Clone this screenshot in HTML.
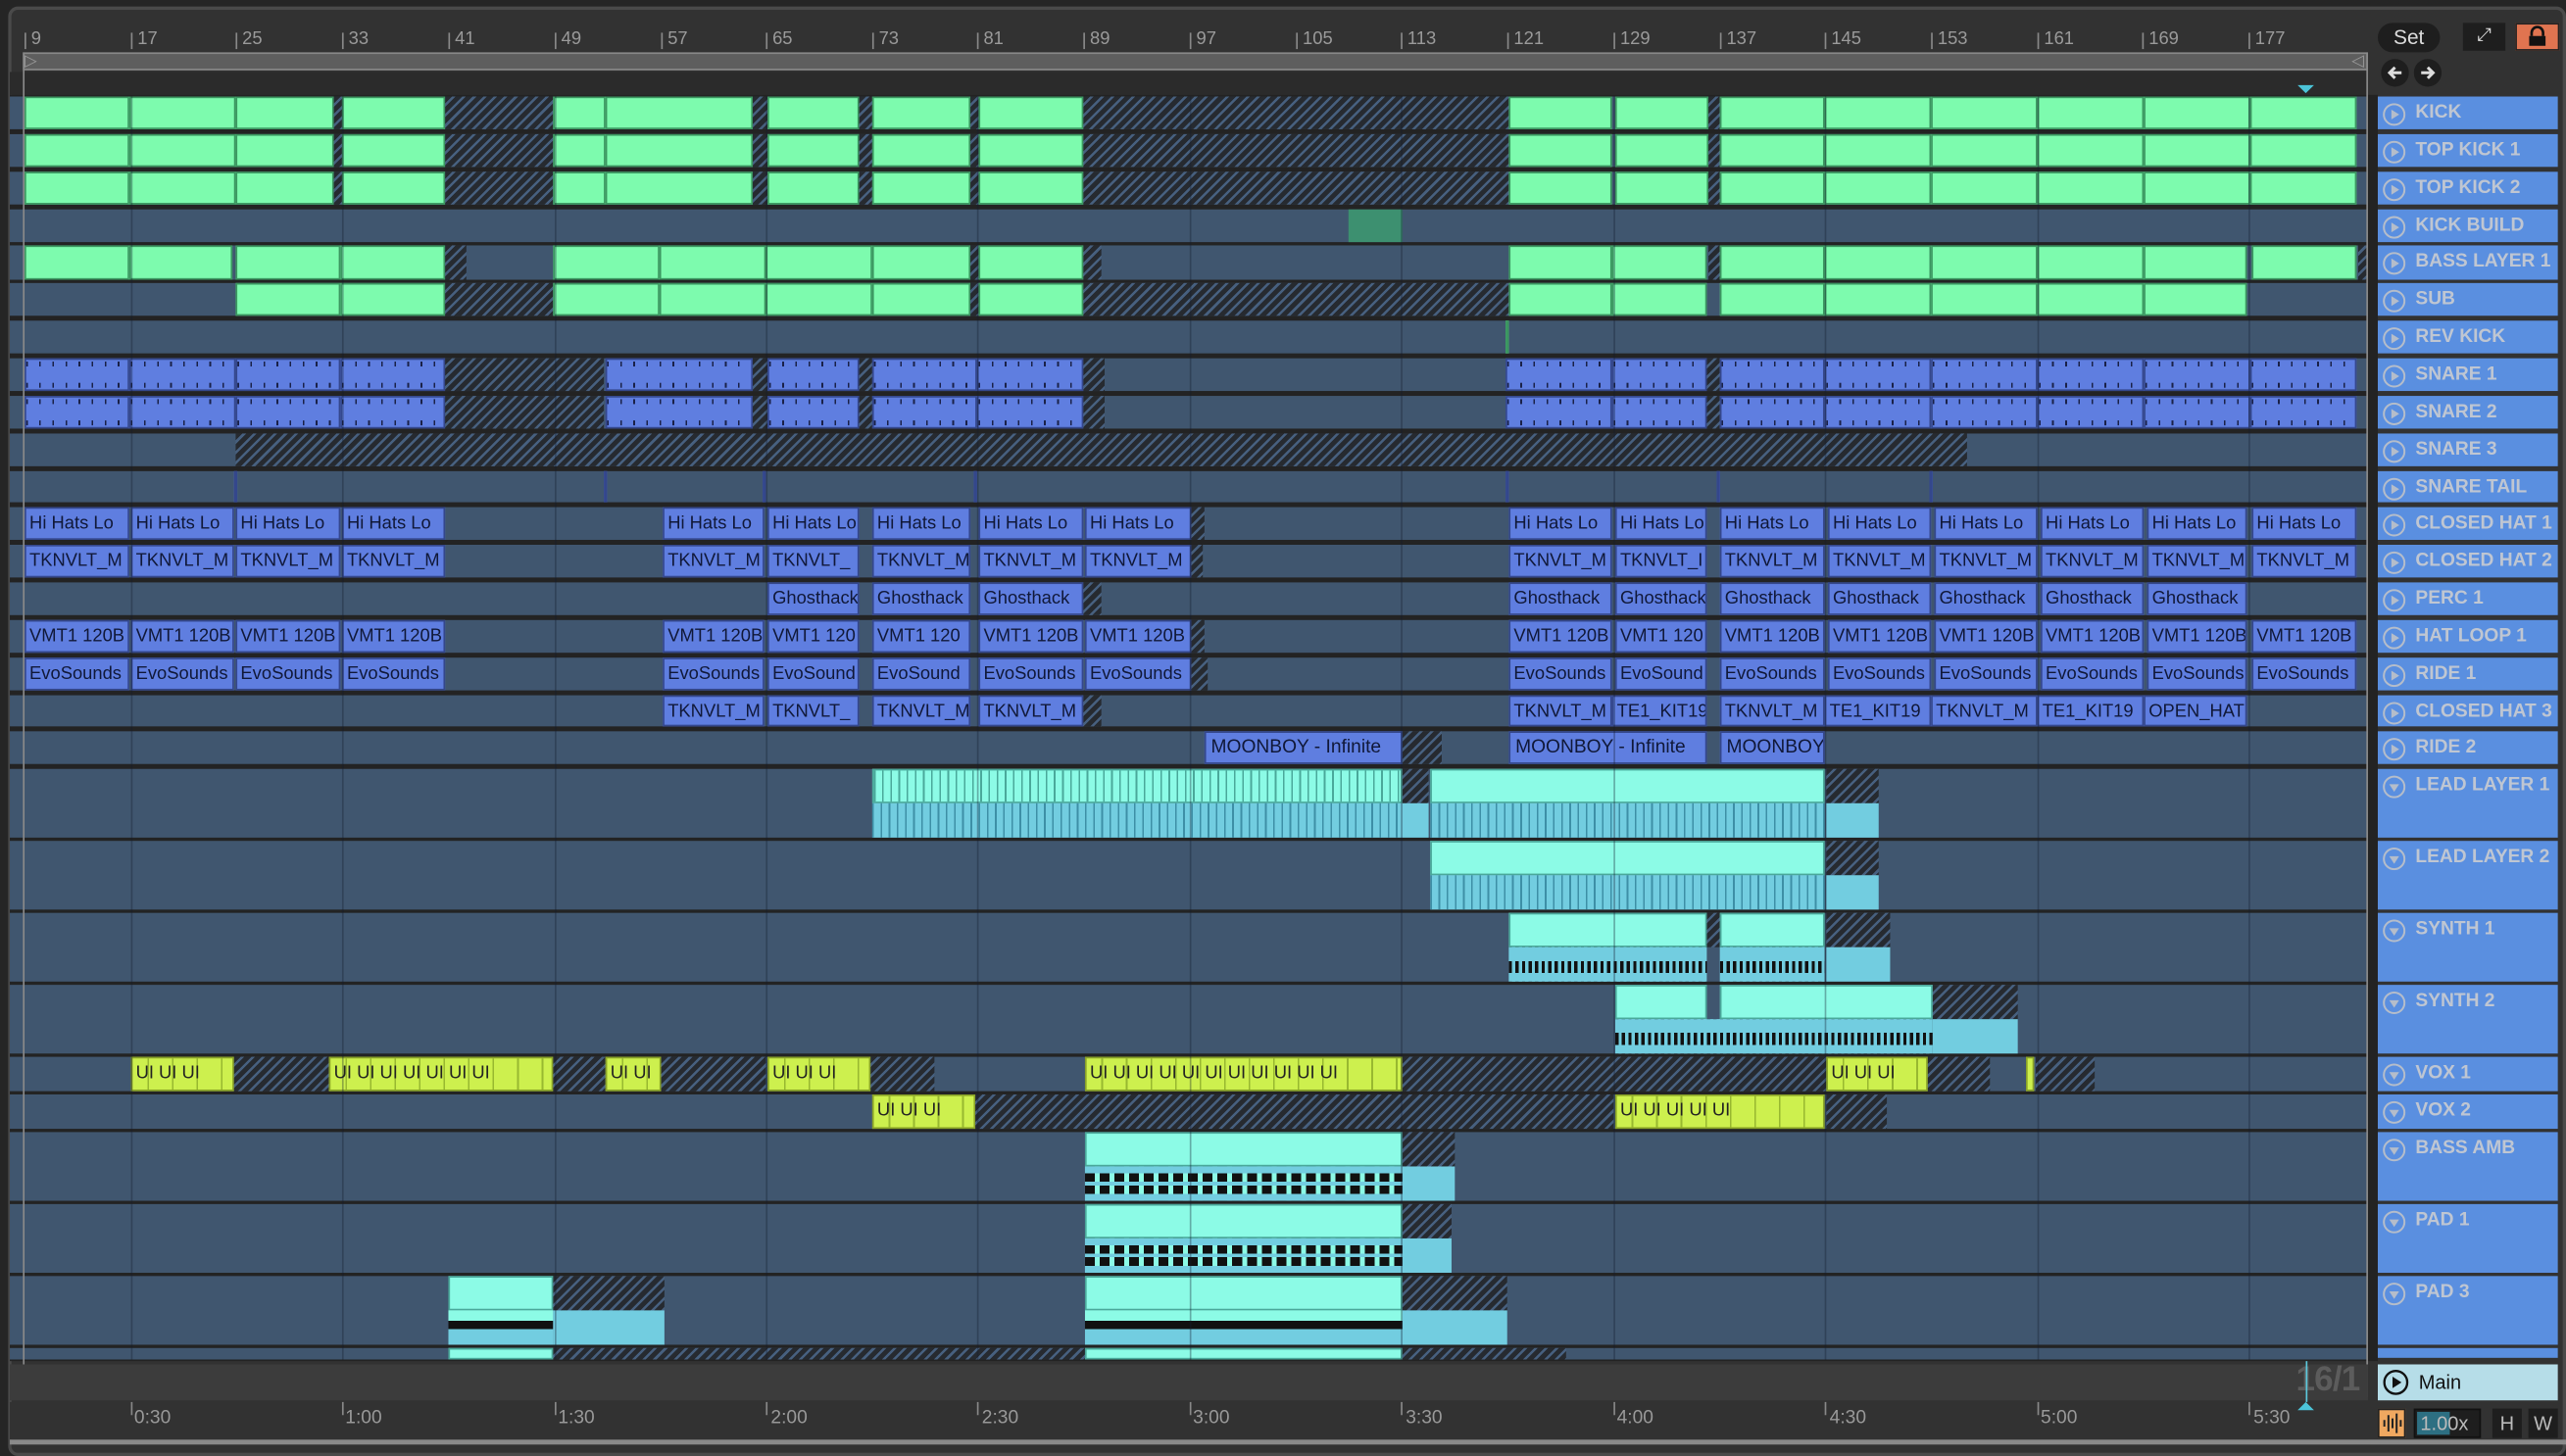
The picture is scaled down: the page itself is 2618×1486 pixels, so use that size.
<!DOCTYPE html>
<html><head><meta charset="utf-8">
<style>
*{margin:0;padding:0;box-sizing:border-box}
html,body{width:2618px;height:1486px;overflow:hidden;background:#252525}
#w{position:absolute;left:0;top:0;width:1568px;height:890px;transform:scale(1.66964,1.66966);transform-origin:0 0;font-family:"Liberation Sans",sans-serif;background:#252525}
.a{position:absolute}
.row{position:absolute;left:6px;width:1441px;background:#40566f}
.row i,.row b{position:absolute;top:0;height:100%;display:block;font-style:normal;font-weight:normal}
.g{background:#7dfbae;border:1px solid #3b9660}
.dg{background:#3d9070}
.b{background:#5f7ee0;border:1px solid #34478c;color:#101838;font-size:11px;line-height:18px;padding-left:2px;white-space:nowrap;overflow:hidden}
.t{background:repeating-linear-gradient(90deg,#1a2148 0 1px,transparent 1px 8px) 0 1px/100% 3px no-repeat,repeating-linear-gradient(90deg,#1a2148 0 1px,transparent 1px 8px) 0 14px/100% 3px no-repeat,#5f7ee0}
.h{background:repeating-linear-gradient(135deg,#262a30 0 3px,#47607f 3px 4.5px)}
.row .u{height:50%}
.row .l{top:50%;height:50%}
.cy{background:#8cfbe6;border:1px solid #4aa89a}
.cl{background:repeating-linear-gradient(90deg,#4aa89a 0 1px,transparent 1px 5px),#8cfbe6}
.lb{background:#72cde0}
.ln{background:repeating-linear-gradient(90deg,#3d8fa6 0 1px,transparent 1px 5px),#72cde0}
.md{background:linear-gradient(#72cde0 0 40%,transparent 40% 75%,#72cde0 75%),repeating-linear-gradient(90deg,#111 0 2px,#72cde0 2px 4px)}
.ck{background:linear-gradient(#72cde0 0 20%,transparent 20% 45%,#72cde0 45% 55%,transparent 55% 80%,#72cde0 80%),repeating-linear-gradient(90deg,#111 0 6px,#8cfbe6 6px 9px)}
.bk{background:linear-gradient(#8cfbe6 0 30%,#111 30% 55%,#72cde0 55%)}
.y{background:repeating-linear-gradient(90deg,transparent 0 9px,#98b830 9px 10px,transparent 10px 15px),#cdf04e;border:1px solid #8aa328;color:#222;font-size:11px;line-height:19px;padding-left:2px;overflow:hidden;white-space:nowrap}
.tl{position:absolute;left:1453px;width:110px;background:#5a8fe0;color:#bfc6d2;font-weight:bold;font-size:11.5px}
.tl span{position:absolute;left:23px;top:4px;white-space:nowrap}
.tl svg{position:absolute;left:3px;top:4px}
.rn{position:absolute;top:18px;font-size:11px;color:#9a9a9a}
.tk{position:absolute;top:20px;width:1px;height:10px;background:#888}
.gl{position:absolute;top:59px;height:772px;width:1px;background:rgba(20,30,45,.35)}
.bt{position:absolute;top:861px;font-size:11.5px;color:#999}
</style></head><body><div id="w">
<div class="a" style="left:5px;top:4px;width:1563px;height:886px;border:2px solid #4a4a4a;border-radius:6px;background:#323232"></div>
<div class="a" style="left:14px;top:32px;width:1433px;height:11px;background:#5e5e5e;border:1px solid #888"></div>
<div class="a" style="left:15px;top:33px;color:#999;font-size:10px;line-height:9px">&#9655;</div>
<div class="a" style="left:1437px;top:33px;color:#999;font-size:10px;line-height:9px">&#9665;</div>
<div class="a" style="left:6px;top:44px;width:1441px;height:14px;background:#2b2b2b"></div>
<div class="a" style="left:1404px;top:52px;width:0;height:0;border-left:5px solid transparent;border-right:5px solid transparent;border-top:5px solid #4cc4d8"></div>
<div class="a" style="left:6px;top:58px;width:1447px;height:774px;background:#232323"></div>

<div class="tk" style="left:15px"></div><div class="rn" style="left:19px">9</div>
<div class="tk" style="left:80px"></div><div class="rn" style="left:84px">17</div>
<div class="tk" style="left:144px"></div><div class="rn" style="left:148px">25</div>
<div class="tk" style="left:209px"></div><div class="rn" style="left:213px">33</div>
<div class="tk" style="left:274px"></div><div class="rn" style="left:278px">41</div>
<div class="tk" style="left:339px"></div><div class="rn" style="left:343px">49</div>
<div class="tk" style="left:404px"></div><div class="rn" style="left:408px">57</div>
<div class="tk" style="left:468px"></div><div class="rn" style="left:472px">65</div>
<div class="tk" style="left:533px"></div><div class="rn" style="left:537px">73</div>
<div class="tk" style="left:597px"></div><div class="rn" style="left:601px">81</div>
<div class="tk" style="left:662px"></div><div class="rn" style="left:666px">89</div>
<div class="tk" style="left:727px"></div><div class="rn" style="left:731px">97</div>
<div class="tk" style="left:792px"></div><div class="rn" style="left:796px">105</div>
<div class="tk" style="left:856px"></div><div class="rn" style="left:860px">113</div>
<div class="tk" style="left:921px"></div><div class="rn" style="left:925px">121</div>
<div class="tk" style="left:986px"></div><div class="rn" style="left:990px">129</div>
<div class="tk" style="left:1051px"></div><div class="rn" style="left:1055px">137</div>
<div class="tk" style="left:1115px"></div><div class="rn" style="left:1119px">145</div>
<div class="tk" style="left:1180px"></div><div class="rn" style="left:1184px">153</div>
<div class="tk" style="left:1245px"></div><div class="rn" style="left:1249px">161</div>
<div class="tk" style="left:1309px"></div><div class="rn" style="left:1313px">169</div>
<div class="tk" style="left:1374px"></div><div class="rn" style="left:1378px">177</div>

<div class="row" style="top:59px;height:20px"><i class="g" style="left:9px;width:64px"></i><i class="g" style="left:73px;width:65px"></i><i class="g" style="left:138px;width:60px"></i><i class="h" style="left:198px;width:5px"></i><i class="g" style="left:203px;width:63px"></i><i class="h" style="left:266px;width:66px"></i><i class="g" style="left:332px;width:32px"></i><i class="g" style="left:364px;width:90px"></i><i class="h" style="left:454px;width:9px"></i><i class="g" style="left:463px;width:56px"></i><i class="h" style="left:519px;width:8px"></i><i class="g" style="left:527px;width:60px"></i><i class="h" style="left:587px;width:5px"></i><i class="g" style="left:592px;width:64px"></i><i class="h" style="left:656px;width:260px"></i><i class="g" style="left:916px;width:63px"></i><i class="g" style="left:981px;width:57px"></i><i class="h" style="left:1038px;width:7px"></i><i class="g" style="left:1045px;width:64px"></i><i class="g" style="left:1109px;width:65px"></i><i class="g" style="left:1174px;width:65px"></i><i class="g" style="left:1239px;width:65px"></i><i class="g" style="left:1304px;width:65px"></i><i class="g" style="left:1369px;width:65px"></i></div>
<div class="row" style="top:82px;height:20px"><i class="g" style="left:9px;width:64px"></i><i class="g" style="left:73px;width:65px"></i><i class="g" style="left:138px;width:60px"></i><i class="h" style="left:198px;width:5px"></i><i class="g" style="left:203px;width:63px"></i><i class="h" style="left:266px;width:66px"></i><i class="g" style="left:332px;width:32px"></i><i class="g" style="left:364px;width:90px"></i><i class="h" style="left:454px;width:9px"></i><i class="g" style="left:463px;width:56px"></i><i class="h" style="left:519px;width:8px"></i><i class="g" style="left:527px;width:60px"></i><i class="h" style="left:587px;width:5px"></i><i class="g" style="left:592px;width:64px"></i><i class="h" style="left:656px;width:260px"></i><i class="g" style="left:916px;width:63px"></i><i class="g" style="left:981px;width:57px"></i><i class="h" style="left:1038px;width:7px"></i><i class="g" style="left:1045px;width:64px"></i><i class="g" style="left:1109px;width:65px"></i><i class="g" style="left:1174px;width:65px"></i><i class="g" style="left:1239px;width:65px"></i><i class="g" style="left:1304px;width:65px"></i><i class="g" style="left:1369px;width:65px"></i></div>
<div class="row" style="top:105px;height:20px"><i class="g" style="left:9px;width:64px"></i><i class="g" style="left:73px;width:65px"></i><i class="g" style="left:138px;width:60px"></i><i class="h" style="left:198px;width:5px"></i><i class="g" style="left:203px;width:63px"></i><i class="h" style="left:266px;width:66px"></i><i class="g" style="left:332px;width:32px"></i><i class="g" style="left:364px;width:90px"></i><i class="h" style="left:454px;width:9px"></i><i class="g" style="left:463px;width:56px"></i><i class="h" style="left:519px;width:8px"></i><i class="g" style="left:527px;width:60px"></i><i class="h" style="left:587px;width:5px"></i><i class="g" style="left:592px;width:64px"></i><i class="h" style="left:656px;width:260px"></i><i class="g" style="left:916px;width:63px"></i><i class="g" style="left:981px;width:57px"></i><i class="h" style="left:1038px;width:7px"></i><i class="g" style="left:1045px;width:64px"></i><i class="g" style="left:1109px;width:65px"></i><i class="g" style="left:1174px;width:65px"></i><i class="g" style="left:1239px;width:65px"></i><i class="g" style="left:1304px;width:65px"></i><i class="g" style="left:1369px;width:65px"></i></div>
<div class="row" style="top:128px;height:20px"><i class="dg" style="left:818px;width:33px"></i></div>
<div class="row" style="top:150px;height:21px"><i class="g" style="left:9px;width:64px"></i><i class="g" style="left:73px;width:63px"></i><i class="g" style="left:138px;width:64px"></i><i class="g" style="left:202px;width:64px"></i><i class="h" style="left:266px;width:13px"></i><i class="g" style="left:332px;width:65px"></i><i class="g" style="left:397px;width:65px"></i><i class="g" style="left:462px;width:65px"></i><i class="g" style="left:527px;width:60px"></i><i class="h" style="left:587px;width:5px"></i><i class="g" style="left:592px;width:64px"></i><i class="h" style="left:656px;width:11px"></i><i class="g" style="left:916px;width:63px"></i><i class="g" style="left:979px;width:58px"></i><i class="h" style="left:1038px;width:7px"></i><i class="g" style="left:1045px;width:64px"></i><i class="g" style="left:1109px;width:65px"></i><i class="g" style="left:1174px;width:65px"></i><i class="g" style="left:1239px;width:65px"></i><i class="g" style="left:1304px;width:63px"></i><i class="g" style="left:1370px;width:64px"></i><i class="h" style="left:1435px;width:6px"></i></div>
<div class="row" style="top:173px;height:20px"><i class="g" style="left:138px;width:64px"></i><i class="g" style="left:202px;width:64px"></i><i class="h" style="left:266px;width:66px"></i><i class="g" style="left:332px;width:65px"></i><i class="g" style="left:397px;width:65px"></i><i class="g" style="left:462px;width:65px"></i><i class="g" style="left:527px;width:60px"></i><i class="h" style="left:587px;width:5px"></i><i class="g" style="left:592px;width:64px"></i><i class="h" style="left:656px;width:260px"></i><i class="g" style="left:916px;width:63px"></i><i class="g" style="left:979px;width:58px"></i><i class="g" style="left:1045px;width:64px"></i><i class="g" style="left:1109px;width:65px"></i><i class="g" style="left:1174px;width:65px"></i><i class="g" style="left:1239px;width:65px"></i><i class="g" style="left:1304px;width:63px"></i></div>
<div class="row" style="top:196px;height:20px"><i class="g" style="left:914px;width:2px"></i></div>
<div class="row" style="top:219px;height:20px"><i class="b t" style="left:9px;width:64px"></i><i class="b t" style="left:73px;width:65px"></i><i class="b t" style="left:138px;width:64px"></i><i class="b t" style="left:202px;width:64px"></i><i class="h" style="left:266px;width:97px"></i><i class="b t" style="left:364px;width:90px"></i><i class="h" style="left:454px;width:9px"></i><i class="b t" style="left:463px;width:56px"></i><i class="h" style="left:519px;width:8px"></i><i class="b t" style="left:527px;width:64px"></i><i class="b t" style="left:591px;width:65px"></i><i class="h" style="left:656px;width:13px"></i><i class="b t" style="left:914px;width:65px"></i><i class="b t" style="left:979px;width:58px"></i><i class="h" style="left:1037px;width:8px"></i><i class="b t" style="left:1045px;width:64px"></i><i class="b t" style="left:1109px;width:65px"></i><i class="b t" style="left:1174px;width:65px"></i><i class="b t" style="left:1239px;width:65px"></i><i class="b t" style="left:1304px;width:65px"></i><i class="b t" style="left:1369px;width:65px"></i></div>
<div class="row" style="top:242px;height:20px"><i class="b t" style="left:9px;width:64px"></i><i class="b t" style="left:73px;width:65px"></i><i class="b t" style="left:138px;width:64px"></i><i class="b t" style="left:202px;width:64px"></i><i class="h" style="left:266px;width:97px"></i><i class="b t" style="left:364px;width:90px"></i><i class="h" style="left:454px;width:9px"></i><i class="b t" style="left:463px;width:56px"></i><i class="h" style="left:519px;width:8px"></i><i class="b t" style="left:527px;width:64px"></i><i class="b t" style="left:591px;width:65px"></i><i class="h" style="left:656px;width:13px"></i><i class="b t" style="left:914px;width:65px"></i><i class="b t" style="left:979px;width:58px"></i><i class="h" style="left:1037px;width:8px"></i><i class="b t" style="left:1045px;width:64px"></i><i class="b t" style="left:1109px;width:65px"></i><i class="b t" style="left:1174px;width:65px"></i><i class="b t" style="left:1239px;width:65px"></i><i class="b t" style="left:1304px;width:65px"></i><i class="b t" style="left:1369px;width:65px"></i></div>
<div class="row" style="top:265px;height:20px"><i class="h" style="left:138px;width:1058px"></i></div>
<div class="row" style="top:288px;height:19px"><i class="b" style="left:137px;width:2px;padding:0"></i><i class="b" style="left:363px;width:2px;padding:0"></i><i class="b" style="left:460px;width:2px;padding:0"></i><i class="b" style="left:589px;width:2px;padding:0"></i><i class="b" style="left:914px;width:2px;padding:0"></i><i class="b" style="left:1043px;width:2px;padding:0"></i><i class="b" style="left:1173px;width:2px;padding:0"></i></div>
<div class="row" style="top:310px;height:20px"><i class="b" style="left:9px;width:64px">Hi Hats Lo</i><i class="b" style="left:74px;width:63px">Hi Hats Lo</i><i class="b" style="left:138px;width:64px">Hi Hats Lo</i><i class="b" style="left:203px;width:63px">Hi Hats Lo</i><i class="b" style="left:399px;width:62px">Hi Hats Lo</i><i class="b" style="left:463px;width:56px">Hi Hats Lo</i><i class="b" style="left:527px;width:60px">Hi Hats Lo</i><i class="b" style="left:592px;width:64px">Hi Hats Lo</i><i class="b" style="left:657px;width:65px">Hi Hats Lo</i><i class="h" style="left:722px;width:8px"></i><i class="b" style="left:916px;width:63px">Hi Hats Lo</i><i class="b" style="left:981px;width:56px">Hi Hats Lo</i><i class="b" style="left:1045px;width:64px">Hi Hats Lo</i><i class="b" style="left:1111px;width:63px">Hi Hats Lo</i><i class="b" style="left:1176px;width:63px">Hi Hats Lo</i><i class="b" style="left:1241px;width:63px">Hi Hats Lo</i><i class="b" style="left:1306px;width:61px">Hi Hats Lo</i><i class="b" style="left:1370px;width:64px">Hi Hats Lo</i></div>
<div class="row" style="top:333px;height:20px"><i class="b" style="left:9px;width:64px">TKNVLT_M</i><i class="b" style="left:74px;width:63px">TKNVLT_M</i><i class="b" style="left:138px;width:64px">TKNVLT_M</i><i class="b" style="left:203px;width:63px">TKNVLT_M</i><i class="b" style="left:399px;width:62px">TKNVLT_M</i><i class="b" style="left:463px;width:56px">TKNVLT_</i><i class="b" style="left:527px;width:60px">TKNVLT_M</i><i class="b" style="left:592px;width:64px">TKNVLT_M</i><i class="b" style="left:657px;width:65px">TKNVLT_M</i><i class="h" style="left:722px;width:7px"></i><i class="b" style="left:916px;width:63px">TKNVLT_M</i><i class="b" style="left:981px;width:56px">TKNVLT_I</i><i class="b" style="left:1045px;width:64px">TKNVLT_M</i><i class="b" style="left:1111px;width:63px">TKNVLT_M</i><i class="b" style="left:1176px;width:63px">TKNVLT_M</i><i class="b" style="left:1241px;width:63px">TKNVLT_M</i><i class="b" style="left:1306px;width:61px">TKNVLT_M</i><i class="b" style="left:1370px;width:64px">TKNVLT_M</i></div>
<div class="row" style="top:356px;height:20px"><i class="b" style="left:463px;width:56px">Ghosthack</i><i class="b" style="left:527px;width:60px">Ghosthack</i><i class="b" style="left:592px;width:64px">Ghosthack</i><i class="h" style="left:656px;width:11px"></i><i class="b" style="left:916px;width:63px">Ghosthack</i><i class="b" style="left:981px;width:56px">Ghosthack</i><i class="b" style="left:1045px;width:64px">Ghosthack</i><i class="b" style="left:1111px;width:63px">Ghosthack</i><i class="b" style="left:1176px;width:63px">Ghosthack</i><i class="b" style="left:1241px;width:63px">Ghosthack</i><i class="b" style="left:1306px;width:61px">Ghosthack</i></div>
<div class="row" style="top:379px;height:20px"><i class="b" style="left:9px;width:64px">VMT1 120B</i><i class="b" style="left:74px;width:63px">VMT1 120B</i><i class="b" style="left:138px;width:64px">VMT1 120B</i><i class="b" style="left:203px;width:63px">VMT1 120B</i><i class="b" style="left:399px;width:62px">VMT1 120B</i><i class="b" style="left:463px;width:56px">VMT1 120</i><i class="b" style="left:527px;width:60px">VMT1 120</i><i class="b" style="left:592px;width:64px">VMT1 120B</i><i class="b" style="left:657px;width:65px">VMT1 120B</i><i class="h" style="left:722px;width:8px"></i><i class="b" style="left:916px;width:63px">VMT1 120B</i><i class="b" style="left:981px;width:56px">VMT1 120</i><i class="b" style="left:1045px;width:64px">VMT1 120B</i><i class="b" style="left:1111px;width:63px">VMT1 120B</i><i class="b" style="left:1176px;width:63px">VMT1 120B</i><i class="b" style="left:1241px;width:63px">VMT1 120B</i><i class="b" style="left:1306px;width:61px">VMT1 120B</i><i class="b" style="left:1370px;width:64px">VMT1 120B</i></div>
<div class="row" style="top:402px;height:20px"><i class="b" style="left:9px;width:64px">EvoSounds</i><i class="b" style="left:74px;width:63px">EvoSounds</i><i class="b" style="left:138px;width:64px">EvoSounds</i><i class="b" style="left:203px;width:63px">EvoSounds</i><i class="b" style="left:399px;width:62px">EvoSounds</i><i class="b" style="left:463px;width:56px">EvoSound</i><i class="b" style="left:527px;width:60px">EvoSound</i><i class="b" style="left:592px;width:64px">EvoSounds</i><i class="b" style="left:657px;width:65px">EvoSounds</i><i class="h" style="left:722px;width:10px"></i><i class="b" style="left:916px;width:63px">EvoSounds</i><i class="b" style="left:981px;width:56px">EvoSound</i><i class="b" style="left:1045px;width:64px">EvoSounds</i><i class="b" style="left:1111px;width:63px">EvoSounds</i><i class="b" style="left:1176px;width:63px">EvoSounds</i><i class="b" style="left:1241px;width:63px">EvoSounds</i><i class="b" style="left:1306px;width:61px">EvoSounds</i><i class="b" style="left:1370px;width:64px">EvoSounds</i></div>
<div class="row" style="top:425px;height:19px"><i class="b" style="left:399px;width:62px">TKNVLT_M</i><i class="b" style="left:463px;width:56px">TKNVLT_</i><i class="b" style="left:527px;width:60px">TKNVLT_M</i><i class="b" style="left:592px;width:64px">TKNVLT_M</i><i class="h" style="left:656px;width:11px"></i><i class="b" style="left:916px;width:63px">TKNVLT_M</i><i class="b" style="left:979px;width:58px">TE1_KIT19</i><i class="b" style="left:1045px;width:64px">TKNVLT_M</i><i class="b" style="left:1109px;width:65px">TE1_KIT19</i><i class="b" style="left:1174px;width:65px">TKNVLT_M</i><i class="b" style="left:1239px;width:65px">TE1_KIT19</i><i class="b" style="left:1304px;width:63px">OPEN_HAT</i></div>
<div class="row" style="top:447px;height:20px"><i class="b" style="left:730px;width:121px;font-size:11.5px;padding-left:3px">MOONBOY - Infinite</i><i class="h" style="left:851px;width:24px"></i><i class="b" style="left:916px;width:121px;font-size:11.5px;padding-left:3px">MOONBOY - Infinite</i><i class="b" style="left:1045px;width:64px;font-size:11.5px;padding-left:3px">MOONBOY</i></div>

<div class="row" style="top:470px;height:42px"><i class="u cy cl" style="left:527px;width:324px"></i><i class="l ln" style="left:527px;width:324px"></i><i class="u h" style="left:851px;width:16px"></i><i class="l lb" style="left:851px;width:16px"></i><i class="u cy" style="left:868px;width:241px"></i><i class="l ln" style="left:868px;width:241px"></i><i class="u h" style="left:1110px;width:32px"></i><i class="l lb" style="left:1110px;width:32px"></i></div>
<div class="row" style="top:514px;height:42px"><i class="u cy" style="left:868px;width:241px"></i><i class="l ln" style="left:868px;width:241px"></i><i class="u h" style="left:1110px;width:32px"></i><i class="l lb" style="left:1110px;width:32px"></i></div>
<div class="row" style="top:558px;height:42px"><i class="u cy" style="left:916px;width:121px"></i><i class="l md" style="left:916px;width:121px"></i><i class="u h" style="left:1037px;width:8px"></i><i class="u cy" style="left:1045px;width:64px"></i><i class="l md" style="left:1045px;width:64px"></i><i class="u h" style="left:1110px;width:39px"></i><i class="l lb" style="left:1110px;width:39px"></i></div>
<div class="row" style="top:602px;height:42px"><i class="u cy" style="left:981px;width:56px"></i><i class="u cy" style="left:1045px;width:130px"></i><i class="l md" style="left:981px;width:194px"></i><i class="u h" style="left:1175px;width:52px"></i><i class="l lb" style="left:1175px;width:52px"></i></div>
<div class="row" style="top:646px;height:21px"><i class="y" style="left:74px;width:63px">UI UI UI</i><i class="h" style="left:137px;width:58px"></i><i class="y" style="left:195px;width:137px">UI UI UI UI UI UI UI</i><i class="h" style="left:332px;width:32px"></i><i class="y" style="left:364px;width:34px">UI UI</i><i class="h" style="left:398px;width:64px"></i><i class="y" style="left:463px;width:63px">UI UI UI</i><i class="h" style="left:526px;width:39px"></i><i class="y" style="left:657px;width:194px">UI UI UI UI UI UI UI UI UI UI UI</i><i class="h" style="left:851px;width:259px"></i><i class="y" style="left:1110px;width:62px">UI UI UI</i><i class="h" style="left:1172px;width:38px"></i><i class="y" style="left:1232px;width:5px;padding:0"></i><i class="h" style="left:1238px;width:36px"></i></div>
<div class="row" style="top:669px;height:21px"><i class="y" style="left:527px;width:63px">UI UI UI</i><i class="h" style="left:590px;width:390px"></i><i class="y" style="left:981px;width:128px">UI UI UI UI UI</i><i class="h" style="left:1110px;width:37px"></i></div>
<div class="row" style="top:692px;height:42px"><i class="u cy" style="left:657px;width:194px"></i><i class="l ck" style="left:657px;width:194px"></i><i class="u h" style="left:851px;width:32px"></i><i class="l lb" style="left:851px;width:32px"></i></div>
<div class="row" style="top:736px;height:42px"><i class="u cy" style="left:657px;width:194px"></i><i class="l ck" style="left:657px;width:194px"></i><i class="u h" style="left:851px;width:30px"></i><i class="l lb" style="left:851px;width:30px"></i></div>
<div class="row" style="top:780px;height:42px"><i class="u cy" style="left:268px;width:64px"></i><i class="l bk" style="left:268px;width:64px"></i><i class="u h" style="left:332px;width:68px"></i><i class="l lb" style="left:332px;width:68px"></i><i class="u cy" style="left:657px;width:194px"></i><i class="l bk" style="left:657px;width:194px"></i><i class="u h" style="left:851px;width:64px"></i><i class="l lb" style="left:851px;width:64px"></i></div>
<div class="row" style="top:824px;height:7px"><i class="cy" style="left:268px;width:64px"></i><i class="h" style="left:332px;width:325px"></i><i class="cy" style="left:657px;width:194px"></i><i class="h" style="left:851px;width:100px"></i></div>

<div class="gl" style="left:80px"></div><div class="gl" style="left:209px"></div><div class="gl" style="left:339px"></div><div class="gl" style="left:468px"></div><div class="gl" style="left:597px"></div><div class="gl" style="left:727px"></div><div class="gl" style="left:856px"></div><div class="gl" style="left:986px"></div><div class="gl" style="left:1115px"></div><div class="gl" style="left:1245px"></div><div class="gl" style="left:1374px"></div>
<div class="a" style="left:14px;top:32px;width:1px;height:822px;background:#8a8a8a"></div>
<div class="a" style="left:1446px;top:32px;width:1px;height:822px;background:#8a8a8a"></div>

<div class="a" style="left:6px;top:834px;width:1441px;height:22px;background:#3c3c3c"></div>
<div class="a" style="left:1403px;top:832px;color:#5c5c5c;font-size:21px;font-weight:bold;letter-spacing:-0.5px">16/1</div>
<div class="a" style="left:1409px;top:832px;width:1px;height:26px;background:#5cc8dc"></div>
<div class="a" style="left:6px;top:857px;width:1441px;height:23px;background:#323232"></div>
<div class="a" style="left:1404px;top:857px;width:0;height:0;border-left:5px solid transparent;border-right:5px solid transparent;border-bottom:5px solid #4cc4d8"></div>
<div class="a" style="left:6px;top:880px;width:1562px;height:3px;background:#8a8a8a"></div>
<div class="bt" style="left:82px">0:30</div><div class="bt" style="left:211px">1:00</div><div class="bt" style="left:341px">1:30</div><div class="bt" style="left:471px">2:00</div><div class="bt" style="left:600px">2:30</div><div class="bt" style="left:729px">3:00</div><div class="bt" style="left:859px">3:30</div><div class="bt" style="left:988px">4:00</div><div class="bt" style="left:1118px">4:30</div><div class="bt" style="left:1247px">5:00</div><div class="bt" style="left:1377px">5:30</div>
<div class="a" style="left:80px;top:857px;width:1px;height:8px;background:#888"></div><div class="a" style="left:209px;top:857px;width:1px;height:8px;background:#888"></div><div class="a" style="left:339px;top:857px;width:1px;height:8px;background:#888"></div><div class="a" style="left:468px;top:857px;width:1px;height:8px;background:#888"></div><div class="a" style="left:597px;top:857px;width:1px;height:8px;background:#888"></div><div class="a" style="left:727px;top:857px;width:1px;height:8px;background:#888"></div><div class="a" style="left:856px;top:857px;width:1px;height:8px;background:#888"></div><div class="a" style="left:986px;top:857px;width:1px;height:8px;background:#888"></div><div class="a" style="left:1115px;top:857px;width:1px;height:8px;background:#888"></div><div class="a" style="left:1245px;top:857px;width:1px;height:8px;background:#888"></div><div class="a" style="left:1374px;top:857px;width:1px;height:8px;background:#888"></div>

<div class="a" style="left:1453px;top:14px;width:38px;height:18px;border-radius:9px;background:#1e1e1e;color:#ddd;font-size:12.5px;text-align:center;line-height:18px">Set</div>
<div class="a" style="left:1505px;top:14px;width:26px;height:17px;background:#1e1e1e;color:#ddd;font-size:11px;text-align:center;line-height:17px">&#10530;</div>
<div class="a" style="left:1537px;top:14px;width:27px;height:17px;background:#e07450;border:1px solid #222"><svg width="25" height="15" viewBox="0 0 25 15"><path d="M9 7V5a3.5 3.5 0 0 1 7 0v2" fill="none" stroke="#111" stroke-width="1.6"/><rect x="7.5" y="7" width="10" height="6" fill="#111"/></svg></div>
<svg class="a" style="left:1455px;top:36px" width="17" height="17"><circle cx="8.5" cy="8.5" r="8.5" fill="#1e1e1e"/><path d="M12.5 8.5H5.5M8.5 5.2L5.2 8.5l3.3 3.3" fill="none" stroke="#ddd" stroke-width="1.8"/></svg>
<svg class="a" style="left:1475px;top:36px" width="17" height="17"><circle cx="8.5" cy="8.5" r="8.5" fill="#1e1e1e"/><path d="M4.5 8.5h7M8.5 5.2l3.3 3.3-3.3 3.3" fill="none" stroke="#ddd" stroke-width="1.8"/></svg>

<svg width="0" height="0" style="position:absolute"><defs><g id="p"><circle cx="7" cy="7" r="6.3" fill="none" stroke="#b5bdca" stroke-width="1.2"/><path d="M5.3 4v6l4.8-3z" fill="#b5bdca"/></g><g id="d"><circle cx="7" cy="7" r="6.3" fill="none" stroke="#b5bdca" stroke-width="1.2"/><path d="M4 5.4h6l-3 4.6z" fill="#b5bdca"/></g></defs></svg>
<div class="tl" style="top:59px;height:20px"><svg width="14" height="14"><use href="#p"/></svg><span>KICK</span></div>
<div class="tl" style="top:82px;height:20px"><svg width="14" height="14"><use href="#p"/></svg><span>TOP KICK 1</span></div>
<div class="tl" style="top:105px;height:20px"><svg width="14" height="14"><use href="#p"/></svg><span>TOP KICK 2</span></div>
<div class="tl" style="top:128px;height:20px"><svg width="14" height="14"><use href="#p"/></svg><span>KICK BUILD</span></div>
<div class="tl" style="top:150px;height:21px"><svg width="14" height="14"><use href="#p"/></svg><span>BASS LAYER 1</span></div>
<div class="tl" style="top:173px;height:20px"><svg width="14" height="14"><use href="#p"/></svg><span>SUB</span></div>
<div class="tl" style="top:196px;height:20px"><svg width="14" height="14"><use href="#p"/></svg><span>REV KICK</span></div>
<div class="tl" style="top:219px;height:20px"><svg width="14" height="14"><use href="#p"/></svg><span>SNARE 1</span></div>
<div class="tl" style="top:242px;height:20px"><svg width="14" height="14"><use href="#p"/></svg><span>SNARE 2</span></div>
<div class="tl" style="top:265px;height:20px"><svg width="14" height="14"><use href="#p"/></svg><span>SNARE 3</span></div>
<div class="tl" style="top:288px;height:19px"><svg width="14" height="14"><use href="#p"/></svg><span>SNARE TAIL</span></div>
<div class="tl" style="top:310px;height:20px"><svg width="14" height="14"><use href="#p"/></svg><span>CLOSED HAT 1</span></div>
<div class="tl" style="top:333px;height:20px"><svg width="14" height="14"><use href="#p"/></svg><span>CLOSED HAT 2</span></div>
<div class="tl" style="top:356px;height:20px"><svg width="14" height="14"><use href="#p"/></svg><span>PERC 1</span></div>
<div class="tl" style="top:379px;height:20px"><svg width="14" height="14"><use href="#p"/></svg><span>HAT LOOP 1</span></div>
<div class="tl" style="top:402px;height:20px"><svg width="14" height="14"><use href="#p"/></svg><span>RIDE 1</span></div>
<div class="tl" style="top:425px;height:19px"><svg width="14" height="14"><use href="#p"/></svg><span>CLOSED HAT 3</span></div>
<div class="tl" style="top:447px;height:20px"><svg width="14" height="14"><use href="#p"/></svg><span>RIDE 2</span></div>
<div class="tl" style="top:470px;height:42px"><svg width="14" height="14"><use href="#d"/></svg><span>LEAD LAYER 1</span></div>
<div class="tl" style="top:514px;height:42px"><svg width="14" height="14"><use href="#d"/></svg><span>LEAD LAYER 2</span></div>
<div class="tl" style="top:558px;height:42px"><svg width="14" height="14"><use href="#d"/></svg><span>SYNTH 1</span></div>
<div class="tl" style="top:602px;height:42px"><svg width="14" height="14"><use href="#d"/></svg><span>SYNTH 2</span></div>
<div class="tl" style="top:646px;height:21px"><svg width="14" height="14"><use href="#d"/></svg><span>VOX 1</span></div>
<div class="tl" style="top:669px;height:21px"><svg width="14" height="14"><use href="#d"/></svg><span>VOX 2</span></div>
<div class="tl" style="top:692px;height:42px"><svg width="14" height="14"><use href="#d"/></svg><span>BASS AMB</span></div>
<div class="tl" style="top:736px;height:42px"><svg width="14" height="14"><use href="#d"/></svg><span>PAD 1</span></div>
<div class="tl" style="top:780px;height:42px"><svg width="14" height="14"><use href="#d"/></svg><span>PAD 3</span></div>
<div class="tl" style="top:824px;height:6px"></div>
<div class="tl" style="top:834px;height:22px;background:#b6dde8;color:#111"><svg width="16" height="16" style="top:3px"><circle cx="8" cy="8" r="7" fill="none" stroke="#111" stroke-width="1.4"/><path d="M6 4.5v7l5.5-3.5z" fill="#111"/></svg><span style="left:25px;top:4px;font-size:12px;font-weight:normal">Main</span></div>

<div class="a" style="left:1453px;top:861px;width:17px;height:18px;background:#f0a860;border:1px solid #222"><svg width="15" height="16"><path d="M3 6v4M5.5 3v10M8 5v6M10.5 2v12M13 6v4" stroke="#222" stroke-width="1.2"/></svg></div>
<div class="a" style="left:1475px;top:861px;width:41px;height:18px;background:#1e1e1e;border:1px solid #111"><div class="a" style="left:1px;top:1px;width:20px;height:14px;background:#2d6f82"></div><div class="a" style="left:3px;top:1px;color:#bbb;font-size:12px">1.00x</div></div>
<div class="a" style="left:1523px;top:861px;width:18px;height:18px;background:#1e1e1e;color:#bbb;font-size:12px;text-align:center;line-height:18px">H</div>
<div class="a" style="left:1545px;top:861px;width:18px;height:18px;background:#1e1e1e;color:#bbb;font-size:12px;text-align:center;line-height:18px">W</div>
</div></body></html>
